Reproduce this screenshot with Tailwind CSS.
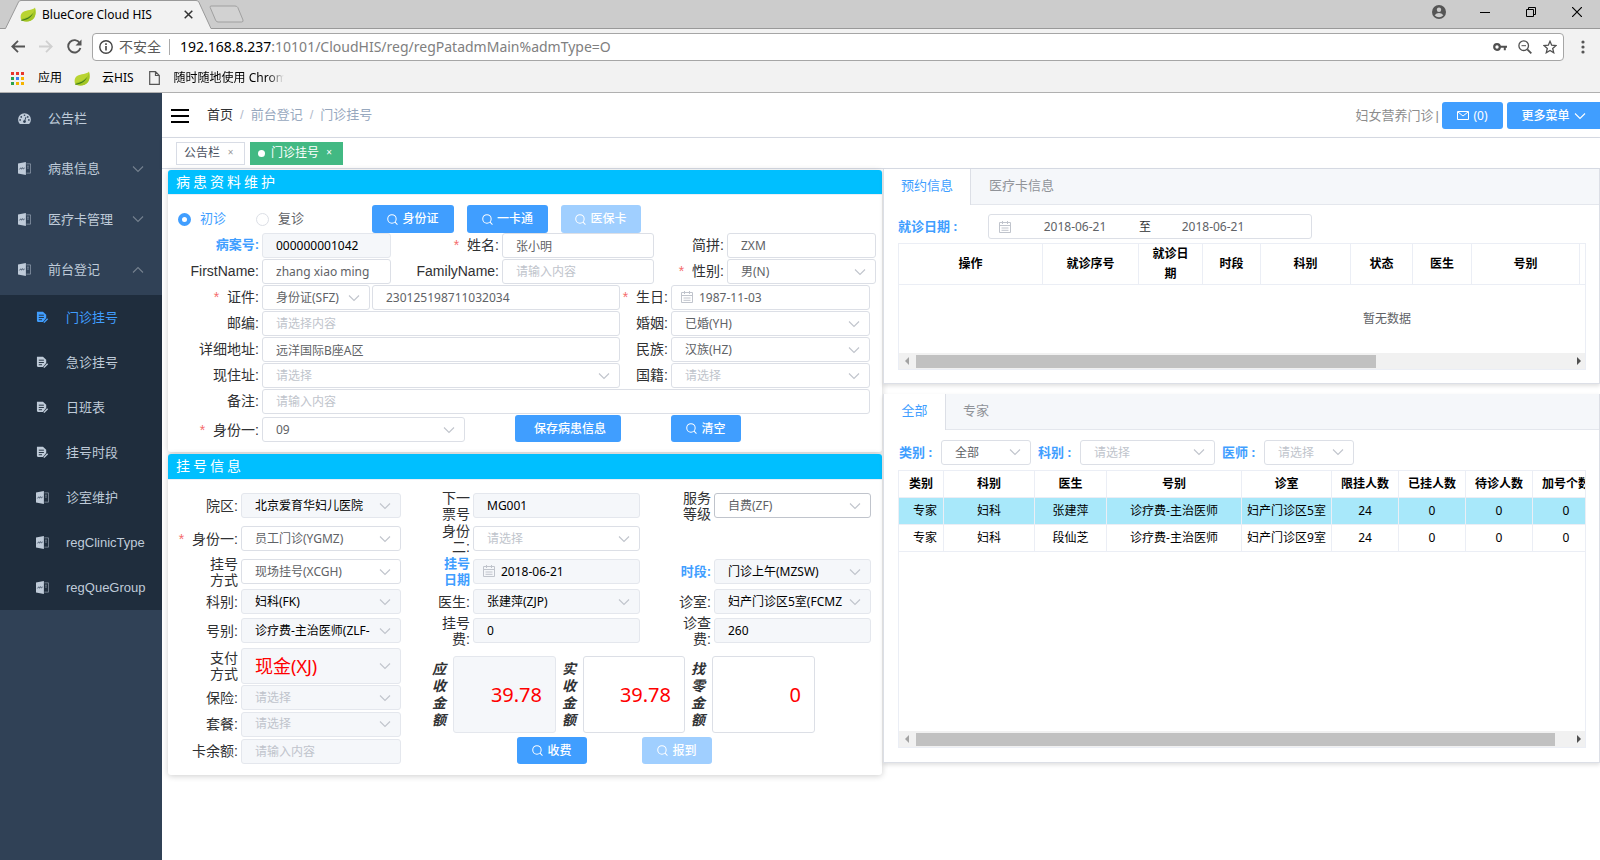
<!DOCTYPE html>
<html lang="zh-CN">
<head>
<meta charset="utf-8">
<title>BlueCore Cloud HIS</title>
<script src="https://cdn.jsdelivr.net/npm/@tailwindcss/browser@4"></script>
</head>
<body class="flex min-h-screen flex-col bg-white font-['Noto_Sans','Noto_Sans_CJK_SC',sans-serif] text-[13px] text-[#303133]">

<svg width="0" height="0" class="absolute" aria-hidden="true">
  <symbol id="down" viewBox="0 0 12 12"><path d="M1 3.5 6 8.500 11 3.500" fill="none" stroke="currentColor" stroke-width="1.1"/></symbol>
  <symbol id="up" viewBox="0 0 12 12"><path d="M1 8.500 6 3.500 11 8.500" fill="none" stroke="currentColor" stroke-width="1.1"/></symbol>
  <symbol id="search" viewBox="0 0 12 12"><circle cx="5.4" cy="5.4" r="4.6" fill="none" stroke="currentColor" stroke-width="1.1"/><path d="M8.800 8.800 11.400 11.600" stroke="currentColor" stroke-width="1.1"/></symbol>
  <symbol id="cal" viewBox="0 0 12 12"><path d="M.5 1.500h11v10H.5zM.5 4.500h11M3.500 0v3M8.500 0v3M2.500 7h7M2.500 9.300h7" fill="none" stroke="currentColor"/></symbol>
  <symbol id="leaf" viewBox="0 0 16 15"><path d="M15 .5C13 3.500 7 2.500 3 5 .5 6.600 .2 10 1 12.500 4 15 11 15.500 14 11 16 8 15.800 3.500 15 .5z" fill="#b9d432"/><path d="M15 1.500C13 8.500 7 10.500 2.500 11.500L1.200 13C5 15.500 11 15 14 11 16 8 15.800 4 15 1.500z" fill="#a3c626"/><path d="M1 13C6 11.500 10 10.500 13 6 11 11.500 6 13 1.500 13.800z" fill="#3f7d1c"/></symbol>
  <symbol id="doc" viewBox="0 0 14 14"><path d="M0 1.500 8.500 0v14L0 12.500z" fill="currentColor"/><path d="M9 2h4.500v10H9" fill="none" stroke="currentColor" stroke-width=".9" opacity=".6"/><path d="M10 4.500h1.500M10 6.500h1.500" stroke="currentColor" opacity=".8"/><path d="M1.500 8 3 6.200l.8 1.600 1.200-1.800.8 1.500 1.500-1.200" fill="none" stroke="#304156" stroke-width=".8"/></symbol>
  <symbol id="edit" viewBox="0 0 14 14"><path d="M1 .8h6.500L11 4v3.500L7.500 11.800H2.200Q1 11.800 1 10.600z" fill="currentColor"/><path d="M3 4.500h5.500M3 7h5.500M3 9.400h3.500" stroke="#1f2d3d" stroke-width="1"/><path d="M8.500 12.500 12.500 8.300" stroke="currentColor" stroke-width="1.500"/></symbol>
</svg>

<!-- browser window -->
<div class="shrink-0 text-xs text-black">
  <div class="flex h-[29px] border-b border-[#999] bg-[#cccccc]">
    <div class="relative z-10 flex h-[29px] w-[211px] shrink-0 items-center pl-5">
      <svg class="absolute inset-0" width="211" height="29" viewBox="0 0 211 29"><path d="M0 29 5.500 28.500 18.500 2Q19.200.5 21 .5H196Q198 .5 198.800 2L211 28.500V29z" fill="#f2f2f2"/><path d="M0 28.500H5.500L18.500 2Q19.200.5 21 .5H196Q198 .5 198.800 2L211 28.500" fill="none" stroke="#999"/></svg>
      <svg class="relative h-[15px] w-4"><use href="#leaf"/></svg>
      <span class="relative ml-1.5 w-[142px]">BlueCore Cloud HIS</span>
      <button aria-label="关闭标签页" class="relative"><svg width="9" height="9" viewBox="0 0 9 9"><path d="M.7.7 8.300 8.300M8.300.7.7 8.300" stroke="#333" stroke-width="1.500"/></svg></button>
    </div>
    <button aria-label="新标签页" class="-ml-0.5"><svg width="36" height="18" viewBox="0 0 36 18"><path d="M2 1H26Q28 1 28.800 2.500L34 15Q34.500 17 32.500 17H9Q7.300 17 6.500 15L1.200 2.500Q.8 1 2 1z" fill="#d2d2d2" stroke="#a0a0a0"/></svg></button>
    <div class="ml-auto flex items-center pb-1 pr-[18px]">
      <button aria-label="用户" class="mr-[34px]"><svg width="14" height="14" viewBox="0 0 14 14"><circle cx="7" cy="7" r="7" fill="#555"/><circle cx="7" cy="4.800" r="2.200" fill="#ccc"/><path d="M2.600 10.300Q4.500 8 7 8T11.400 10.300Q9.500 12.300 7 12.300T2.600 10.300z" fill="#ccc"/></svg></button>
      <button aria-label="最小化" class="mr-9"><svg width="10" height="10" viewBox="0 0 10 10"><path d="M0 5.500h10" stroke="#000"/></svg></button>
      <button aria-label="还原" class="mr-9"><svg width="10" height="10" viewBox="0 0 10 10"><path d="M.5 2.500h7v7h-7zM2.500 2.500v-2h7v7h-2" fill="none" stroke="#000"/></svg></button>
      <button aria-label="关闭"><svg width="10" height="10" viewBox="0 0 10 10"><path d="M0 0 10 10M10 0 0 10" stroke="#000" stroke-width="1.200"/></svg></button>
    </div>
  </div>
  <div class="flex h-8 items-end bg-[#f2f2f2] pl-[11px] pr-[15px]">
    <button aria-label="后退" class="mb-2"><svg width="14" height="13" viewBox="0 0 14 13"><path d="M14 6.500H1.500M7 .8 1.300 6.500 7 12.200" fill="none" stroke="#555" stroke-width="1.800"/></svg></button>
    <button aria-label="前进" class="mb-2 ml-3.5"><svg width="14" height="13" viewBox="0 0 14 13"><path d="M0 6.500H12.500M7 .8 12.700 6.500 7 12.200" fill="none" stroke="#d0d0d0" stroke-width="1.800"/></svg></button>
    <button aria-label="刷新" class="ml-3.5 mb-[7px]"><svg width="15" height="15" viewBox="0 0 15 15"><path d="M12.700 4A6.200 6.200 0 1 0 13.400 9" fill="none" stroke="#555" stroke-width="1.900"/><path d="M14.500.5V6.500H8.500z" fill="#555"/></svg></button>
    <div class="ml-2.5 flex h-7 flex-1 items-center rounded-sm border border-[#a6a6a6] bg-white px-1.5 text-sm">
      <svg width="14" height="14" viewBox="0 0 14 14"><circle cx="7" cy="7" r="6.200" fill="none" stroke="#444" stroke-width="1.400"/><path d="M7 6v4.500M7 3.300v1.700" stroke="#444" stroke-width="1.600"/></svg>
      <span class="ml-1.5 text-[#5a5a5a]">不安全</span>
      <span class="ml-2 mr-2.5 h-4 w-px shrink-0 bg-[#aaa]"></span>
      <span class="flex-1 text-[#808080]"><span class="text-black">192.168.8.237</span>:10101/CloudHIS/reg/regPatadmMain%admType=O</span>
      <svg class="mr-[11px]" width="14" height="10" viewBox="0 0 14 10"><circle cx="4" cy="5" r="2.800" fill="none" stroke="#505050" stroke-width="2.200"/><path d="M7 4.700h7M11.800 4.700v3.500" stroke="#505050" stroke-width="2"/></svg>
      <svg class="mr-[11px]" width="14" height="14" viewBox="0 0 14 14"><circle cx="5.700" cy="5.700" r="4.800" fill="none" stroke="#505050" stroke-width="1.300"/><path d="M9.300 9.300 13.300 13.300" stroke="#505050" stroke-width="1.800"/><path d="M3.500 5.700h4.500" stroke="#505050"/></svg>
      <svg width="14" height="14" viewBox="0 0 14 14"><path d="M7 1.300 8.700 5.200 13 5.600 9.700 8.400 10.700 12.700 7 10.400 3.300 12.700 4.300 8.400 1 5.600 5.300 5.200z" fill="none" stroke="#505050" stroke-width="1.300"/></svg>
    </div>
    <button aria-label="菜单" class="mb-[7px] ml-[17px]"><svg width="4" height="14" viewBox="0 0 4 14"><g fill="#555"><circle cx="2" cy="2" r="1.600"/><circle cx="2" cy="7" r="1.600"/><circle cx="2" cy="12" r="1.600"/></g></svg></button>
  </div>
  <div class="flex h-8 items-center border-b border-[#b0b0b0] bg-[#f2f2f2] pl-[11px] pt-[3px]">
    <svg width="13" height="13" viewBox="0 0 13 13"><path fill="#e8372c" d="M0 0h3v3H0zM5 0h3v3H5zM10 0h3v3h-3z"/><path fill="#2ba24c" d="M0 5h3v3H0zM0 10h3v3H0z"/><path fill="#3b7ff0" d="M5 5h3v3H5z"/><path fill="#f5b400" d="M10 5h3v3h-3zM5 10h3v3H5zM10 10h3v3h-3z"/></svg>
    <a href="#" class="ml-3.5">应用</a>
    <svg class="ml-3 h-[15px] w-4"><use href="#leaf"/></svg>
    <a href="#" class="ml-3">云HIS</a>
    <svg class="ml-[15px]" width="11" height="14" viewBox="0 0 11 14"><path d="M.7.7H6.500L10.300 4.500V13.300H.7zM6.500.7V4.500H10.300" fill="none" stroke="#555" stroke-width="1.200"/></svg>
    <a href="#" class="ml-3.5 w-[110px] overflow-hidden whitespace-nowrap mask-r-from-85%">随时随地使用 Chrome</a>
  </div>
</div>

<div class="flex flex-1">
  <!-- side menu -->
  <nav class="w-[162px] shrink-0 bg-[#304156] font-['Liberation_Sans','Noto_Sans_CJK_SC',sans-serif] text-[#bfcbd9] [&_a]:flex [&_a]:items-center">
    <div class="grid h-[202px] auto-rows-fr [&_a]:px-[18px]">
      <a href="#"><svg width="13" height="13" viewBox="0 0 14 13"><path d="M2 12.500A6.900 6.900 0 1 1 12 12.500z" fill="currentColor"/><g fill="#304156"><circle cx="7" cy="3" r=".9"/><circle cx="3.500" cy="4.800" r=".9"/><circle cx="2.300" cy="8" r=".9"/><circle cx="11.700" cy="8" r=".9"/><circle cx="10.500" cy="4.800" r=".9"/><circle cx="7" cy="9.800" r="1.500"/></g><path d="M7 9.800 8.600 4.800" stroke="#304156"/></svg><span class="ml-[17px]">公告栏</span></a>
      <a href="#"><svg class="size-[13px]"><use href="#doc"/></svg><span class="ml-[17px] flex-1">病患信息</span><svg class="size-3 text-[#75818f]"><use href="#down"/></svg></a>
      <a href="#"><svg class="size-[13px]"><use href="#doc"/></svg><span class="ml-[17px] flex-1">医疗卡管理</span><svg class="size-3 text-[#75818f]"><use href="#down"/></svg></a>
      <a href="#"><svg class="size-[13px]"><use href="#doc"/></svg><span class="ml-[17px] flex-1">前台登记</span><svg class="size-3 text-[#75818f]"><use href="#up"/></svg></a>
    </div>
    <div class="bg-[#1f2d3d] [&_a]:h-[45px] [&_a]:gap-[17px] [&_a]:pl-9 [&_svg]:size-[13px] [&_svg]:shrink-0">
      <a href="#" class="text-[#409eff]"><svg><use href="#edit"/></svg>门诊挂号</a>
      <a href="#"><svg><use href="#edit"/></svg>急诊挂号</a>
      <a href="#"><svg><use href="#edit"/></svg>日班表</a>
      <a href="#"><svg><use href="#edit"/></svg>挂号时段</a>
      <a href="#"><svg><use href="#doc"/></svg>诊室维护</a>
      <a href="#"><svg><use href="#doc"/></svg>regClinicType</a>
      <a href="#"><svg><use href="#doc"/></svg>regQueGroup</a>
    </div>
  </nav>

  <div class="flex min-w-0 flex-1 flex-col">
    <header class="flex h-[45px] items-center border-b border-[#d8dce5] pl-[9px] pt-px">
      <button aria-label="折叠菜单"><svg width="18" height="14" viewBox="0 0 18 14"><path d="M0 1h18M0 7h18M0 13h18" stroke="#000" stroke-width="2"/></svg></button>
      <div class="ml-[18px] flex gap-[7px] pb-0.5 font-['Liberation_Sans','Noto_Sans_CJK_SC',sans-serif] text-[#97a8be]"><a href="#" class="text-[#303133]">首页</a><span class="text-[#b4bccc]">/</span><span>前台登记</span><span class="text-[#b4bccc]">/</span><span>门诊挂号</span></div>
      <div class="ml-auto flex items-center text-[#8c8c8c]">妇女营养门诊<span class="ml-0.5 font-['Liberation_Sans',sans-serif]">|</span>
        <button class="ml-[3px] flex h-[27px] w-[61px] items-center justify-center gap-1 rounded-[3px] bg-[#409eff] text-xs text-white"><svg width="12" height="9" viewBox="0 0 12 9"><path d="M.5.5h11v8H.5zM1 1 6 5 11 1" fill="none" stroke="#fff"/></svg>(0)</button>
        <button class="ml-1 flex h-[27px] w-[93px] items-center justify-center gap-1 rounded-l-[3px] bg-[#409eff] text-xs font-medium text-white">更多菜单<svg class="size-3"><use href="#down"/></svg></button>
      </div>
    </header>
    <div class="flex h-[31px] items-center gap-[5px] border-b border-[#d8dce5] pl-3.5 text-xs shadow-sm">
      <a href="#" class="flex h-[23px] items-center border border-[#d8dce5] px-[7px] text-[#495060]">公告栏<span class="ml-1 w-[13px] text-center text-[10px] text-[#999]">×</span></a>
      <a href="#" class="flex h-[23px] items-center bg-[#42b983] px-2 text-white"><span class="mr-1.5 size-[7px] rounded-full bg-white"></span>门诊挂号<span class="ml-1 w-3 text-center text-[10px]">×</span></a>
    </div>

    <main class="flex flex-1 items-start gap-px bg-white pl-1.5">
      <!-- left column -->
      <div class="flex min-w-0 flex-[714] flex-col gap-0.5 pt-px font-['Liberation_Sans','Noto_Sans_CJK_SC',sans-serif] text-sm
        [&_input:not([type=radio])]:h-[25px] [&_input:not([type=radio])]:w-full [&_input:not([type=radio])]:min-w-0 [&_input]:rounded-[3px] [&_input]:border [&_input]:border-[#dcdfe6] [&_input:not([type=radio])]:px-[13px] [&_input]:font-['Noto_Sans','Noto_Sans_CJK_SC',sans-serif] [&_input]:text-xs [&_input]:placeholder:text-[#c0c4cc]
        [&_select]:h-[25px] [&_select]:w-full [&_select]:appearance-none [&_select]:rounded-[3px] [&_select]:border [&_select]:border-[#dcdfe6] [&_select]:pl-[13px] [&_select]:pr-6 [&_select]:font-['Noto_Sans','Noto_Sans_CJK_SC',sans-serif] [&_select]:text-xs
        [&_select+svg]:pointer-events-none [&_select+svg]:absolute [&_select+svg]:right-2.5 [&_select+svg]:top-1/2 [&_select+svg]:size-3 [&_select+svg]:-translate-y-1/2 [&_select+svg]:text-[#c0c4cc]
        [&_input:disabled]:bg-[#f5f7fa] [&_input:disabled]:border-[#e4e7ed] [&_select:disabled]:bg-[#f5f7fa] [&_select:disabled]:border-[#e4e7ed] [&_select:disabled]:opacity-100
        [&_button]:flex [&_button]:items-center [&_button]:justify-center [&_button]:gap-1 [&_button]:rounded-[3px] [&_button]:text-xs [&_button]:font-medium [&_button]:text-white [&_button>svg]:size-[11px]
        [&_i]:mr-2 [&_i]:not-italic [&_i]:text-[#f56c6c]">
        <section class="rounded-[3px] bg-white shadow-[0_1px_6px_rgba(0,0,0,0.2)]">
          <h2 class="h-[25px] rounded-t-[3px] border-b border-[#ebeef5] bg-[#00bfff] pl-2 leading-6 tracking-[3px] text-white">病患资料维护</h2>
          <form class="pb-2.5 pt-2.5 text-[#606266] [&_label]:pr-[3px] [&_label]:text-right [&_label]:leading-6 [&_label]:whitespace-nowrap">
            <div class="flex h-7 items-center pl-2.5 text-[13px]">
              <div class="flex w-[78px] items-center gap-[9px] text-[#409eff]"><input type="radio" name="visit" id="v1" checked class="size-[13px] appearance-none rounded-full! checked:border-[4px]! checked:border-[#409eff]!"><label for="v1">初诊</label></div>
              <div class="flex w-[116px] items-center gap-[9px]"><input type="radio" name="visit" id="v2" class="size-[13px] appearance-none rounded-full!"><label for="v2">复诊</label></div>
              <button type="button" class="mr-[13px] h-7 w-[82px] bg-[#409eff]"><svg><use href="#search"/></svg>身份证</button>
              <button type="button" class="mr-[13px] h-7 w-[81px] bg-[#409eff]"><svg><use href="#search"/></svg>一卡通</button>
              <button type="button" disabled class="h-7 w-20 bg-[#a0cfff]"><svg><use href="#search"/></svg>医保卡</button>
            </div>
            <div class="grid h-[26px] grid-cols-[94fr_129fr_111fr_152fr_73fr_149fr_6fr]">
              <label for="a1" class="text-[13px] font-bold text-[#409eff]">病案号:</label><input id="a1" disabled value="000000001042" class="text-black">
              <label for="a2" class="text-[#303133]"><i>*</i>姓名:</label><input id="a2" value="张小明">
              <label for="a3" class="text-[#303133]">简拼:</label><input id="a3" value="ZXM">
            </div>
            <div class="grid h-[26px] grid-cols-[94fr_129fr_111fr_152fr_73fr_149fr_6fr]">
              <label for="a4" class="text-[#303133]">FirstName:</label><input id="a4" value="zhang xiao ming">
              <label for="a5" class="text-[#303133]">FamilyName:</label><input id="a5" placeholder="请输入内容">
              <label for="a6" class="text-[#303133]"><i>*</i>性别:</label><div class="relative h-[25px] min-w-0"><select id="a6"><option>男(N)</option></select><svg><use href="#down"/></svg></div>
            </div>
            <div class="grid h-[26px] grid-cols-[94fr_108fr_2fr_248fr_51fr_199fr_12fr]">
              <label for="a7" class="text-[#303133]"><i>*</i>证件:</label><div class="relative h-[25px] min-w-0"><select id="a7"><option>身份证(SFZ)</option></select><svg><use href="#down"/></svg></div><span></span>
              <input aria-label="证件号" value="230125198711032034">
              <label for="a8" class="text-[#303133]"><i>*</i>生日:</label><div class="relative h-[25px] min-w-0"><input id="a8" value="1987-11-03" class="pl-[27px]!"><svg class="absolute left-2.5 top-1.5 size-3 text-[#c0c4cc]"><use href="#cal"/></svg></div>
            </div>
            <div class="grid h-[26px] grid-cols-[94fr_358fr_51fr_199fr_12fr]">
              <label for="a9" class="text-[#303133]">邮编:</label><input id="a9" placeholder="请选择内容">
              <label for="a10" class="text-[#303133]">婚姻:</label><div class="relative h-[25px] min-w-0"><select id="a10"><option>已婚(YH)</option></select><svg><use href="#down"/></svg></div>
            </div>
            <div class="grid h-[26px] grid-cols-[94fr_358fr_51fr_199fr_12fr]">
              <label for="a11" class="text-[#303133]">详细地址:</label><input id="a11" value="远洋国际B座A区">
              <label for="a12" class="text-[#303133]">民族:</label><div class="relative h-[25px] min-w-0"><select id="a12"><option>汉族(HZ)</option></select><svg><use href="#down"/></svg></div>
            </div>
            <div class="grid h-[26px] grid-cols-[94fr_358fr_51fr_199fr_12fr]">
              <label for="a13" class="text-[#303133]">现住址:</label><div class="relative h-[25px] min-w-0"><select id="a13" class="text-[#c0c4cc]"><option>请选择</option></select><svg><use href="#down"/></svg></div>
              <label for="a14" class="text-[#303133]">国籍:</label><div class="relative h-[25px] min-w-0"><select id="a14" class="text-[#c0c4cc]"><option>请选择</option></select><svg><use href="#down"/></svg></div>
            </div>
            <div class="grid h-[26px] grid-cols-[94fr_608fr_12fr]">
              <label for="a15" class="text-[#303133]">备注:</label><input id="a15" placeholder="请输入内容">
            </div>
            <div class="grid h-[27px] grid-cols-[94fr_203fr_50fr_106fr_50fr_70fr_141fr] items-end">
              <label for="a16" class="text-[#303133]"><i>*</i>身份一:</label><div class="relative h-[25px] min-w-0"><select id="a16"><option>09</option></select><svg><use href="#down"/></svg></div><span></span>
              <button type="button" class="h-[27px] bg-[#409eff] pl-1">保存病患信息</button><span></span>
              <button type="button" class="h-[27px] bg-[#409eff]"><svg><use href="#search"/></svg>清空</button>
            </div>
          </form>
        </section>

        <section class="rounded-[3px] bg-white shadow-[0_1px_6px_rgba(0,0,0,0.2)]">
          <h2 class="h-[26px] rounded-t-[3px] border-b border-[#ebeef5] bg-[#00bfff] pl-2 leading-[25px] tracking-[3px] text-white">挂号信息</h2>
          <form class="pb-[11px] pt-[13px] text-[#606266] [&_label]:pr-[3px] [&_label]:text-right [&_label]:leading-4 [&_label]:whitespace-nowrap">
            <div class="mb-2 grid h-[25px] grid-cols-[73fr_160fr_72fr_167fr_74fr_157fr_11fr] grid-rows-[25px] items-center">
              <label for="b1" class="text-[#303133]">院区:</label><div class="relative h-[25px] min-w-0"><select id="b1" disabled class="text-black"><option>北京爱育华妇儿医院</option></select><svg><use href="#down"/></svg></div>
              <label for="b2" class="text-[#303133]">下一<br>票号</label><input id="b2" disabled value="MG001" class="text-black">
              <label for="b3" class="text-[#303133]">服务<br>等级</label><div class="relative h-[25px] min-w-0"><select id="b3" class="border-[#c0c4cc]!"><option>自费(ZF)</option></select><svg><use href="#down"/></svg></div>
            </div>
            <div class="mb-2 grid h-[25px] grid-cols-[73fr_160fr_72fr_167fr_74fr_157fr_11fr] grid-rows-[25px] items-center">
              <label for="b4" class="text-[#303133]"><i>*</i>身份一:</label><div class="relative h-[25px] min-w-0"><select id="b4"><option>员工门诊(YGMZ)</option></select><svg><use href="#down"/></svg></div>
              <label for="b5" class="text-[#303133]">身份<br>二:</label><div class="relative h-[25px] min-w-0"><select id="b5" class="text-[#c0c4cc]"><option>请选择</option></select><svg><use href="#down"/></svg></div>
            </div>
            <div class="mb-[5px] grid h-[25px] grid-cols-[73fr_160fr_72fr_167fr_74fr_157fr_11fr] grid-rows-[25px] items-center">
              <label for="b6" class="text-[#303133]">挂号<br>方式</label><div class="relative h-[25px] min-w-0"><select id="b6"><option>现场挂号(XCGH)</option></select><svg><use href="#down"/></svg></div>
              <label for="b7" class="text-[13px] font-bold text-[#409eff]">挂号<br>日期</label><div class="relative h-[25px] min-w-0"><input id="b7" disabled value="2018-06-21" class="pl-[27px]! text-black"><svg class="absolute left-2.5 top-1.5 size-3 text-[#c0c4cc]"><use href="#cal"/></svg></div>
              <label for="b8" class="text-[13px] font-bold text-[#409eff]">时段:</label><div class="relative h-[25px] min-w-0"><select id="b8" disabled class="text-black"><option>门诊上午(MZSW)</option></select><svg><use href="#down"/></svg></div>
            </div>
            <div class="mb-1 grid h-[25px] grid-cols-[73fr_160fr_72fr_167fr_74fr_157fr_11fr] grid-rows-[25px] items-center">
              <label for="b9" class="text-[#303133]">科别:</label><div class="relative h-[25px] min-w-0"><select id="b9" disabled class="text-black"><option>妇科(FK)</option></select><svg><use href="#down"/></svg></div>
              <label for="b10" class="text-[#303133]">医生:</label><div class="relative h-[25px] min-w-0"><select id="b10" disabled class="text-black"><option>张建萍(ZJP)</option></select><svg><use href="#down"/></svg></div>
              <label for="b11" class="text-[#303133]">诊室:</label><div class="relative h-[25px] min-w-0"><select id="b11" disabled class="text-black"><option>妇产门诊区5室(FCMZ</option></select><svg><use href="#down"/></svg></div>
            </div>
            <div class="grid h-[25px] grid-cols-[73fr_160fr_72fr_167fr_74fr_157fr_11fr] grid-rows-[25px] items-center">
              <label for="b12" class="text-[#303133]">号别:</label><div class="relative h-[25px] min-w-0"><select id="b12" disabled class="text-black"><option>诊疗费-主治医师(ZLF-</option></select><svg><use href="#down"/></svg></div>
              <label for="b13" class="text-[#303133]">挂号<br>费:</label><input id="b13" disabled value="0" class="text-black">
              <label for="b14" class="text-[#303133]">诊查<br>费:</label><input id="b14" disabled value="260" class="text-black">
            </div>
            <div class="grid grid-cols-[233fr_481fr]">
              <div class="grid grid-cols-[73fr_160fr] items-center gap-y-px pt-[5px]">
                <label for="c1" class="text-[#303133]">支付<br>方式</label><div class="relative h-9 min-w-0"><select id="c1" disabled class="h-9! text-lg! text-[#ff0000]"><option>现金(XJ)</option></select><svg><use href="#down"/></svg></div>
                <label for="c2" class="text-[#303133]">保险:</label><div class="relative h-[25px] min-w-0"><select id="c2" disabled class="text-[#c0c4cc]"><option>请选择</option></select><svg><use href="#down"/></svg></div>
                <label for="c3" class="text-[#303133]">套餐:</label><div class="relative h-[25px] min-w-0"><select id="c3" disabled class="text-[#c0c4cc]"><option>请选择</option></select><svg><use href="#down"/></svg></div>
                <label for="c4" class="text-[#303133]">卡余额:</label><input id="c4" disabled placeholder="请输入内容" class="mt-px">
              </div>
              <div class="pt-[13px]">
                <div class="grid grid-cols-[52fr_103fr_27fr_102fr_27fr_103fr_67fr] items-center [&_input]:h-[77px]! [&_input]:text-right [&_input]:text-xl! [&_input]:text-[#ff0000] [&_label]:pr-[7px]! [&_label]:font-bold [&_label]:italic [&_label]:leading-[17px]! [&_label]:text-[#303133]">
                  <label for="d1">应<br>收<br>金<br>额</label><input id="d1" disabled value="39.78">
                  <label for="d2">实<br>收<br>金<br>额</label><input id="d2" value="39.78">
                  <label for="d3">找<br>零<br>金<br>额</label><input id="d3" value="0">
                </div>
                <div class="mt-1 grid grid-cols-[116fr_70fr_55fr_70fr_170fr]"><span></span>
                  <button type="button" class="h-[27px] bg-[#409eff]"><svg><use href="#search"/></svg>收费</button><span></span>
                  <button type="button" disabled class="h-[27px] bg-[#a0cfff]"><svg><use href="#search"/></svg>报到</button>
                </div>
              </div>
            </div>
          </form>
        </section>
      </div>

      <!-- right column -->
      <div class="flex min-w-0 flex-[717] flex-col gap-2.5 [&_th]:border-r [&_th]:border-b [&_th]:border-[#ebeef5] [&_th]:p-0 [&_th]:leading-5 [&_td]:border-r [&_td]:border-b [&_td]:border-[#ebeef5] [&_td]:p-0 [&_td]:text-center [&_td]:whitespace-nowrap">
        <section class="border border-t-0 border-[#dcdfe6] bg-white shadow-[0_2px_4px_rgba(0,0,0,0.12)]">
          <div class="flex h-9 bg-[#f5f7fa] text-[#909399] [&_button]:pb-0.5">
            <button class="w-[87px] border-r border-[#dcdfe6] bg-white text-[#409eff]">预约信息</button>
            <button class="flex-1 border-b border-[#e4e7ed] pl-[18px] text-left">医疗卡信息</button>
          </div>
          <div class="pb-[13px] pl-3.5 pr-[13px] pt-[9px]">
            <div class="flex h-[25px] items-center">
              <label for="e1" class="w-[90px] font-bold text-[#409eff]">就诊日期 :</label>
              <div class="flex h-[25px] w-[324px] items-center rounded-[3px] border border-[#dcdfe6] pl-2.5 text-xs text-[#606266]">
                <svg class="size-3 text-[#c0c4cc]"><use href="#cal"/></svg>
                <input id="e1" value="2018-06-21" class="w-[128px] text-center"><span class="text-[#303133]">至</span><input aria-label="结束日期" value="2018-06-21" class="w-[124px] text-center">
              </div>
            </div>
            <div class="mt-1 flex h-[127px] flex-col border border-[#ebeef5] text-xs">
              <div class="flex-1 overflow-hidden">
                <table class="w-[976px] table-fixed border-separate border-spacing-0 text-black">
                  <thead><tr class="h-[41px]"><th class="w-[144px]">操作</th><th class="w-24">就诊序号</th><th class="w-16">就诊日<br>期</th><th class="w-[58px]">时段</th><th class="w-[90px]">科别</th><th class="w-[62px]">状态</th><th class="w-[59px]">医生</th><th class="w-[108px]">号别</th><th></th></tr></thead>
                  <tbody><tr class="h-[67px]"><td colspan="9" class="border-0! text-[#606266]">暂无数据</td></tr></tbody>
                </table>
              </div>
              <div class="flex h-4 items-center bg-[#f1f1f1]">
                <svg width="17" height="8" viewBox="0 0 17 8"><path d="M10 0v8L6 4z" fill="#a3a3a3"/></svg>
                <div class="flex-1"><div class="h-[13px] bg-[#c1c1c1]" style="width:70.6%"></div></div>
                <svg width="17" height="8" viewBox="0 0 17 8"><path d="M9 0v8L13 4z" fill="#505050"/></svg>
              </div>
            </div>
          </div>
        </section>

        <section class="border border-t-0 border-[#dcdfe6] bg-white shadow-[0_2px_4px_rgba(0,0,0,0.12)]">
          <div class="flex h-9 bg-[#f5f7fa] text-[#909399] [&_button]:pb-0.5">
            <button class="w-[62px] border-r border-[#dcdfe6] bg-white text-[#409eff]">全部</button>
            <button class="flex-1 border-b border-[#e4e7ed] pl-[17px] text-left">专家</button>
          </div>
          <div class="pb-3.5 pl-3.5 pr-[13px] pt-2.5">
            <div class="flex h-[25px] items-center [&_label]:w-[43px] [&_label]:pl-px [&_label]:font-bold [&_label]:text-[#409eff] [&_select]:h-[25px] [&_select]:w-full [&_select]:appearance-none [&_select]:rounded-[3px] [&_select]:border [&_select]:border-[#dcdfe6] [&_select]:pl-[13px] [&_select]:text-xs [&_select+svg]:pointer-events-none [&_select+svg]:absolute [&_select+svg]:right-2.5 [&_select+svg]:top-1.5 [&_select+svg]:size-3 [&_select+svg]:text-[#c0c4cc]">
              <label for="f1">类别 :</label><div class="relative mr-1.5 w-[90px]"><select id="f1" class="text-[#606266]"><option>全部</option></select><svg><use href="#down"/></svg></div>
              <label for="f2">科别 :</label><div class="relative mr-1.5 w-[135px]"><select id="f2" class="text-[#c0c4cc]"><option>请选择</option></select><svg><use href="#down"/></svg></div>
              <label for="f3">医师 :</label><div class="relative w-[90px]"><select id="f3" class="text-[#c0c4cc]"><option>请选择</option></select><svg><use href="#down"/></svg></div>
            </div>
            <div class="mt-[5px] flex h-[278px] flex-col border border-[#ebeef5] text-xs">
              <div class="flex-1 overflow-hidden">
                <table class="w-[701px] table-fixed border-separate border-spacing-0 text-black [&_tr]:h-[27px]">
                  <thead><tr><th class="w-[45px]">类别</th><th class="w-[91px]">科别</th><th class="w-[72px]">医生</th><th class="w-[135px]">号别</th><th class="w-[90px]">诊室</th><th class="w-[67px]">限挂人数</th><th class="w-[67px]">已挂人数</th><th class="w-[67px]">待诊人数</th><th class="w-[67px]">加号个数</th></tr></thead>
                  <tbody>
                    <tr class="bg-[#a8e8fa]"><td class="pl-2!">专家</td><td>妇科</td><td>张建萍</td><td>诊疗费-主治医师</td><td>妇产门诊区5室</td><td>24</td><td>0</td><td>0</td><td>0</td></tr>
                    <tr><td class="pl-2!">专家</td><td>妇科</td><td>段仙芝</td><td>诊疗费-主治医师</td><td>妇产门诊区9室</td><td>24</td><td>0</td><td>0</td><td>0</td></tr>
                  </tbody>
                </table>
              </div>
              <div class="flex h-4 items-center bg-[#f1f1f1]">
                <svg width="17" height="8" viewBox="0 0 17 8"><path d="M10 0v8L6 4z" fill="#a3a3a3"/></svg>
                <div class="flex-1"><div class="h-[13px] bg-[#c1c1c1]" style="width:98%"></div></div>
                <svg width="17" height="8" viewBox="0 0 17 8"><path d="M9 0v8L13 4z" fill="#505050"/></svg>
              </div>
            </div>
          </div>
        </section>
      </div>
    </main>
  </div>
</div>
</body>
</html>
